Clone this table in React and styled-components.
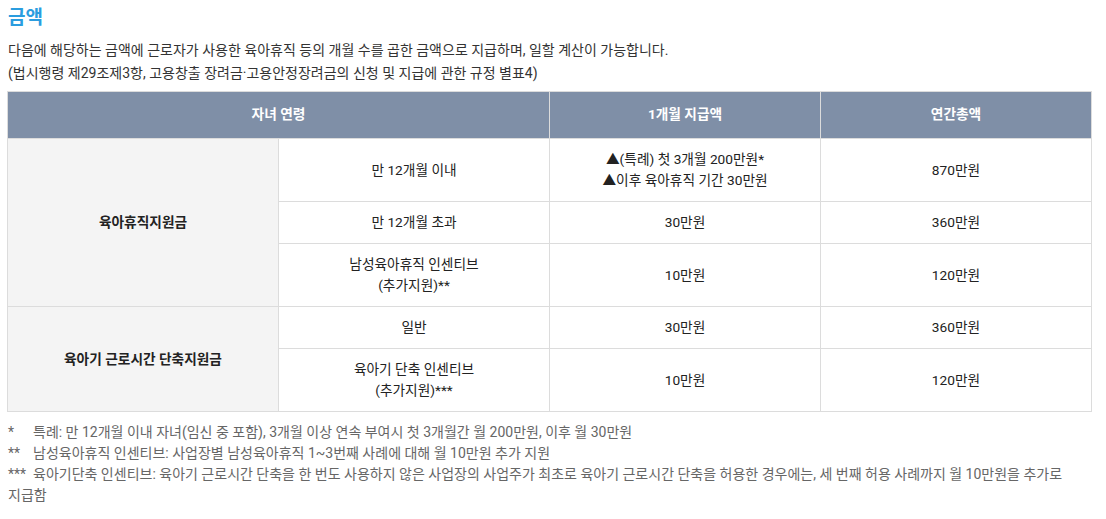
import React from "react";
import styled, { createGlobalStyle } from "styled-components";

const GlobalStyle = createGlobalStyle`
  body {
    margin: 0;
    background: #fff;
    font-family: Roboto, "Noto Sans CJK KR", sans-serif;
    color: #222;
  }
`;

const Page = styled.div`
  padding: 6px 14px 0 7px;
`;

const Title = styled.h3`
  margin: 0 0 9px 1px;
  font-size: 19px;
  line-height: 24px;
  font-weight: 700;
  color: #2b9ddf;
`;

const Desc = styled.p`
  margin: 0 0 6px 1px;
  font-size: 14px;
  line-height: 23px;
  color: #333;
`;

const Table = styled.table`
  width: 1085px;
  border-collapse: collapse;
  table-layout: fixed;
  border: 1px solid #dcdcdc;
  font-size: 13.7px;
  line-height: 21px;
`;

const Th = styled.th`
  background: #7f8fa7;
  color: #fff;
  font-weight: 700;
  padding: 12px 8px 13px;
  border: 1px solid #dcdcdc;
  text-align: center;
`;

const Td = styled.td`
  padding: 10px 8px;
  border: 1px solid #dcdcdc;
  text-align: center;
  vertical-align: middle;
  color: #222;
  background: ${(p) => (p.$head ? "#f4f4f4" : "#fff")};
  font-weight: ${(p) => (p.$head ? 700 : 400)};
`;

const Notes = styled.ul`
  list-style: none;
  margin: 10px 0 0 1px;
  padding: 0;
  font-size: 14px;
  line-height: 21px;
  color: #666;
  word-break: keep-all;
`;

const Note = styled.li``;

const Mark = styled.span`
  display: inline-block;
  min-width: 21px;
  margin-right: 4px;
  white-space: nowrap;
`;

const rows = [
  {
    group: "육아휴직지원금",
    span: 3,
    age: ["만 12개월 이내"],
    month: ["▲(특례) 첫 3개월 200만원*", "▲이후 육아휴직 기간 30만원"],
    year: "870만원",
  },
  { age: ["만 12개월 초과"], month: ["30만원"], year: "360만원" },
  {
    age: ["남성육아휴직 인센티브", "(추가지원)**"],
    month: ["10만원"],
    year: "120만원",
  },
  {
    group: "육아기 근로시간 단축지원금",
    span: 2,
    age: ["일반"],
    month: ["30만원"],
    year: "360만원",
  },
  {
    age: ["육아기 단축 인센티브", "(추가지원)***"],
    month: ["10만원"],
    year: "120만원",
  },
];

const Lines = ({ items }) =>
  items.map((t, i) => (
    <React.Fragment key={i}>
      {i > 0 && <br />}
      {t}
    </React.Fragment>
  ));

export default function App() {
  return (
    <Page>
      <GlobalStyle />
      <Title>금액</Title>
      <Desc>
        다음에 해당하는 금액에 근로자가 사용한 육아휴직 등의 개월 수를 곱한 금액으로 지급하며, 일할 계산이 가능합니다.
        <br />
        (법시행령 제29조제3항, 고용창출 장려금·고용안정장려금의 신청 및 지급에 관한 규정 별표4)
      </Desc>
      <Table>
        <thead>
          <tr>
            <Th colSpan={2}>자녀 연령</Th>
            <Th>1개월 지급액</Th>
            <Th>연간총액</Th>
          </tr>
        </thead>
        <tbody>
          {rows.map((r, i) => (
            <tr key={i}>
              {r.group && (
                <Td $head rowSpan={r.span}>
                  {r.group}
                </Td>
              )}
              <Td>
                <Lines items={r.age} />
              </Td>
              <Td>
                <Lines items={r.month} />
              </Td>
              <Td>{r.year}</Td>
            </tr>
          ))}
        </tbody>
      </Table>
      <Notes>
        <Note>
          <Mark>*</Mark>특례: 만 12개월 이내 자녀(임신 중 포함), 3개월 이상 연속 부여시 첫 3개월간 월 200만원, 이후 월 30만원
        </Note>
        <Note>
          <Mark>**</Mark>남성육아휴직 인센티브: 사업장별 남성육아휴직 1~3번째 사례에 대해 월 10만원 추가 지원
        </Note>
        <Note>
          <Mark>***</Mark>육아기단축 인센티브: 육아기 근로시간 단축을 한 번도 사용하지 않은 사업장의 사업주가 최초로 육아기 근로시간 단축을 허용한 경우에는, 세 번째 허용 사례까지 월 10만원을 추가로 지급함
        </Note>
      </Notes>
    </Page>
  );
}
